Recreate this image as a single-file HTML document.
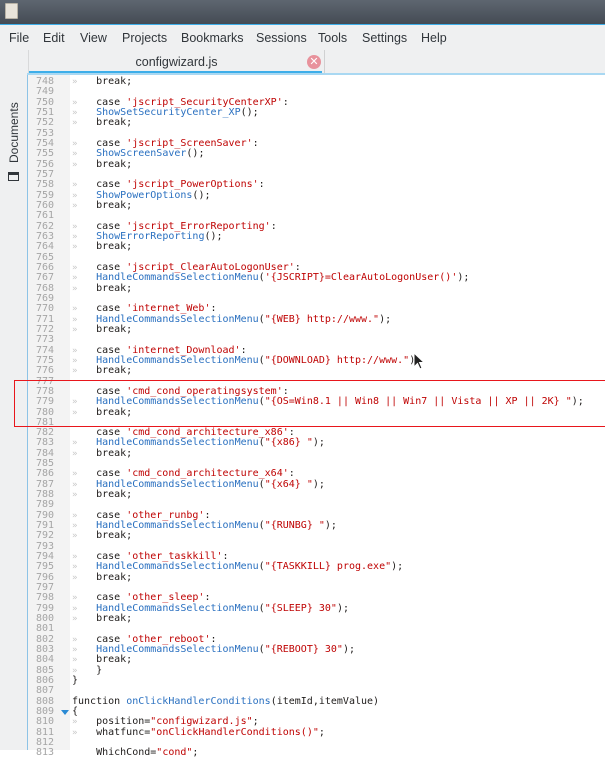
<!DOCTYPE html>
<html><head><meta charset="utf-8">
<style>
*{margin:0;padding:0;box-sizing:border-box}
body{width:605px;height:750px;overflow:hidden;background:#fff;font-family:"Liberation Sans",sans-serif;position:relative}
#title{position:absolute;left:0;top:0;width:605px;height:24px;background:linear-gradient(#5e6670,#444b54)}
#title .ic{position:absolute;left:5px;top:3px;width:13px;height:16px;background:#e9e4da;border:1px solid #b8b2a5;border-radius:1px}
#tline{position:absolute;left:0;top:24px;width:605px;height:1px;background:#3daee9}
#menu{position:absolute;left:0;top:25px;width:605px;height:25px;background:#eff0f1;font-size:12.5px;color:#31363b}
#menu span{position:absolute;top:6px}
#side{position:absolute;left:0;top:50px;width:27px;height:700px;background:#eff0f1}
#side .doc{position:absolute;left:-16px;top:76px;transform:rotate(-90deg);font-size:12px;color:#31363b;width:60px;text-align:center}
#side .fi{position:absolute;left:8px;top:122px;width:11px;height:9px;border:1.5px solid #31363b;border-top-width:3px}
#tabbar{position:absolute;left:27px;top:50px;width:578px;height:25px;background:#eff0f1;border-bottom:2px solid #a9d8f2}
#tab{position:absolute;left:28px;top:50px;width:297px;height:23px;background:#eff0f1;border-left:1px solid #d8d9da;border-right:1px solid #d0d1d2;font-size:12.5px;color:#31363b;text-align:center;padding-top:5px}
#tab:after{content:"";position:absolute;left:0;right:2px;bottom:0;height:2px;background:#3daee9}
#close{position:absolute;left:307px;top:55px;width:14px;height:14px;border-radius:50%;background:#e8929c;color:#fff;font-size:11px;line-height:14px;text-align:center}
#vline{position:absolute;left:27px;top:75px;width:1px;height:675px;background:#8dc3e6}
#gut{position:absolute;left:28px;top:75px;width:42px;height:675px;background:#f3f3f3}
#code{position:absolute;left:0;top:77px;width:605px}
.l{height:10.33px;line-height:10.33px;font-family:"DejaVu Sans Mono","Liberation Mono",monospace;font-size:10px;white-space:pre;position:relative;color:#1f1c1b}
.n{position:absolute;left:28px;width:26px;text-align:right;color:#a5a5a5}
.m{position:absolute;left:72px;color:#c8c8c8;font-size:9px}
.t{position:absolute;left:72px}
.s{color:#bf0303}
.f{color:#2a70c0}
.fold{position:absolute;left:61px;top:3px;width:0;height:0;border-left:4px solid transparent;border-right:4px solid transparent;border-top:5px solid #2a8ad4}
#box{position:absolute;left:14px;top:380px;width:591px;height:47px;border:1.5px solid #e8161c;border-right:none}
#cur{position:absolute;left:413px;top:352px}
</style></head><body>
<div id="title"><div class="ic"></div></div>
<div id="tline"></div>
<div id="menu"><span style="left:9px">File</span><span style="left:43px">Edit</span><span style="left:80px">View</span><span style="left:122px">Projects</span><span style="left:181px">Bookmarks</span><span style="left:256px">Sessions</span><span style="left:318px">Tools</span><span style="left:362px">Settings</span><span style="left:421px">Help</span></div>
<div id="side"><div class="doc">Documents</div><div class="fi"></div></div>
<div id="tabbar"></div>
<div id="tab">configwizard.js</div>
<div id="close">✕</div>
<div id="gut"></div>
<div id="vline"></div>
<div id="code">
<div class="l"><span class="n">748</span><span class="m">»</span><span class="t">    break;</span></div>
<div class="l"><span class="n">749</span></div>
<div class="l"><span class="n">750</span><span class="m">»</span><span class="t">    case <span class="s">'jscript_SecurityCenterXP'</span>:</span></div>
<div class="l"><span class="n">751</span><span class="m">»</span><span class="t">    <span class="f">ShowSetSecurityCenter_XP</span>();</span></div>
<div class="l"><span class="n">752</span><span class="m">»</span><span class="t">    break;</span></div>
<div class="l"><span class="n">753</span></div>
<div class="l"><span class="n">754</span><span class="m">»</span><span class="t">    case <span class="s">'jscript_ScreenSaver'</span>:</span></div>
<div class="l"><span class="n">755</span><span class="m">»</span><span class="t">    <span class="f">ShowScreenSaver</span>();</span></div>
<div class="l"><span class="n">756</span><span class="m">»</span><span class="t">    break;</span></div>
<div class="l"><span class="n">757</span></div>
<div class="l"><span class="n">758</span><span class="m">»</span><span class="t">    case <span class="s">'jscript_PowerOptions'</span>:</span></div>
<div class="l"><span class="n">759</span><span class="m">»</span><span class="t">    <span class="f">ShowPowerOptions</span>();</span></div>
<div class="l"><span class="n">760</span><span class="m">»</span><span class="t">    break;</span></div>
<div class="l"><span class="n">761</span></div>
<div class="l"><span class="n">762</span><span class="m">»</span><span class="t">    case <span class="s">'jscript_ErrorReporting'</span>:</span></div>
<div class="l"><span class="n">763</span><span class="m">»</span><span class="t">    <span class="f">ShowErrorReporting</span>();</span></div>
<div class="l"><span class="n">764</span><span class="m">»</span><span class="t">    break;</span></div>
<div class="l"><span class="n">765</span></div>
<div class="l"><span class="n">766</span><span class="m">»</span><span class="t">    case <span class="s">'jscript_ClearAutoLogonUser'</span>:</span></div>
<div class="l"><span class="n">767</span><span class="m">»</span><span class="t">    <span class="f">HandleCommandsSelectionMenu</span>(<span class="s">'{JSCRIPT}=ClearAutoLogonUser()'</span>);</span></div>
<div class="l"><span class="n">768</span><span class="m">»</span><span class="t">    break;</span></div>
<div class="l"><span class="n">769</span></div>
<div class="l"><span class="n">770</span><span class="m">»</span><span class="t">    case <span class="s">'internet_Web'</span>:</span></div>
<div class="l"><span class="n">771</span><span class="m">»</span><span class="t">    <span class="f">HandleCommandsSelectionMenu</span>(<span class="s">"{WEB} http://www."</span>);</span></div>
<div class="l"><span class="n">772</span><span class="m">»</span><span class="t">    break;</span></div>
<div class="l"><span class="n">773</span></div>
<div class="l"><span class="n">774</span><span class="m">»</span><span class="t">    case <span class="s">'internet_Download'</span>:</span></div>
<div class="l"><span class="n">775</span><span class="m">»</span><span class="t">    <span class="f">HandleCommandsSelectionMenu</span>(<span class="s">"{DOWNLOAD} http://www."</span>);</span></div>
<div class="l"><span class="n">776</span><span class="m">»</span><span class="t">    break;</span></div>
<div class="l"><span class="n">777</span></div>
<div class="l"><span class="n">778</span><span class="t">    case <span class="s">'cmd_cond_operatingsystem'</span>:</span></div>
<div class="l"><span class="n">779</span><span class="m">»</span><span class="t">    <span class="f">HandleCommandsSelectionMenu</span>(<span class="s">"{OS=Win8.1 || Win8 || Win7 || Vista || XP || 2K} "</span>);</span></div>
<div class="l"><span class="n">780</span><span class="m">»</span><span class="t">    break;</span></div>
<div class="l"><span class="n">781</span></div>
<div class="l"><span class="n">782</span><span class="t">    case <span class="s">'cmd_cond_architecture_x86'</span>:</span></div>
<div class="l"><span class="n">783</span><span class="m">»</span><span class="t">    <span class="f">HandleCommandsSelectionMenu</span>(<span class="s">"{x86} "</span>);</span></div>
<div class="l"><span class="n">784</span><span class="m">»</span><span class="t">    break;</span></div>
<div class="l"><span class="n">785</span></div>
<div class="l"><span class="n">786</span><span class="m">»</span><span class="t">    case <span class="s">'cmd_cond_architecture_x64'</span>:</span></div>
<div class="l"><span class="n">787</span><span class="m">»</span><span class="t">    <span class="f">HandleCommandsSelectionMenu</span>(<span class="s">"{x64} "</span>);</span></div>
<div class="l"><span class="n">788</span><span class="m">»</span><span class="t">    break;</span></div>
<div class="l"><span class="n">789</span></div>
<div class="l"><span class="n">790</span><span class="m">»</span><span class="t">    case <span class="s">'other_runbg'</span>:</span></div>
<div class="l"><span class="n">791</span><span class="m">»</span><span class="t">    <span class="f">HandleCommandsSelectionMenu</span>(<span class="s">"{RUNBG} "</span>);</span></div>
<div class="l"><span class="n">792</span><span class="m">»</span><span class="t">    break;</span></div>
<div class="l"><span class="n">793</span></div>
<div class="l"><span class="n">794</span><span class="m">»</span><span class="t">    case <span class="s">'other_taskkill'</span>:</span></div>
<div class="l"><span class="n">795</span><span class="m">»</span><span class="t">    <span class="f">HandleCommandsSelectionMenu</span>(<span class="s">"{TASKKILL} prog.exe"</span>);</span></div>
<div class="l"><span class="n">796</span><span class="m">»</span><span class="t">    break;</span></div>
<div class="l"><span class="n">797</span></div>
<div class="l"><span class="n">798</span><span class="m">»</span><span class="t">    case <span class="s">'other_sleep'</span>:</span></div>
<div class="l"><span class="n">799</span><span class="m">»</span><span class="t">    <span class="f">HandleCommandsSelectionMenu</span>(<span class="s">"{SLEEP} 30"</span>);</span></div>
<div class="l"><span class="n">800</span><span class="m">»</span><span class="t">    break;</span></div>
<div class="l"><span class="n">801</span></div>
<div class="l"><span class="n">802</span><span class="m">»</span><span class="t">    case <span class="s">'other_reboot'</span>:</span></div>
<div class="l"><span class="n">803</span><span class="m">»</span><span class="t">    <span class="f">HandleCommandsSelectionMenu</span>(<span class="s">"{REBOOT} 30"</span>);</span></div>
<div class="l"><span class="n">804</span><span class="m">»</span><span class="t">    break;</span></div>
<div class="l"><span class="n">805</span><span class="m">»</span><span class="t">    }</span></div>
<div class="l"><span class="n">806</span><span class="t">}</span></div>
<div class="l"><span class="n">807</span></div>
<div class="l"><span class="n">808</span><span class="t">function <span class="f">onClickHandlerConditions</span>(itemId,itemValue)</span></div>
<div class="l"><span class="n">809</span><span class="fold"></span><span class="t">{</span></div>
<div class="l"><span class="n">810</span><span class="m">»</span><span class="t">    position=<span class="s">"configwizard.js"</span>;</span></div>
<div class="l"><span class="n">811</span><span class="m">»</span><span class="t">    whatfunc=<span class="s">"onClickHandlerConditions()"</span>;</span></div>
<div class="l"><span class="n">812</span></div>
<div class="l"><span class="n">813</span><span class="t">    WhichCond=<span class="s">"cond"</span>;</span></div>
</div>
<div id="box"></div>
<svg id="cur" width="14" height="20" viewBox="0 0 14 20"><path d="M1 1 L1 15 L4.5 11.5 L7 17 L9 16 L6.5 10.5 L11 10.5 Z" fill="#222" stroke="#fff" stroke-width="1"/></svg>
</body></html>
